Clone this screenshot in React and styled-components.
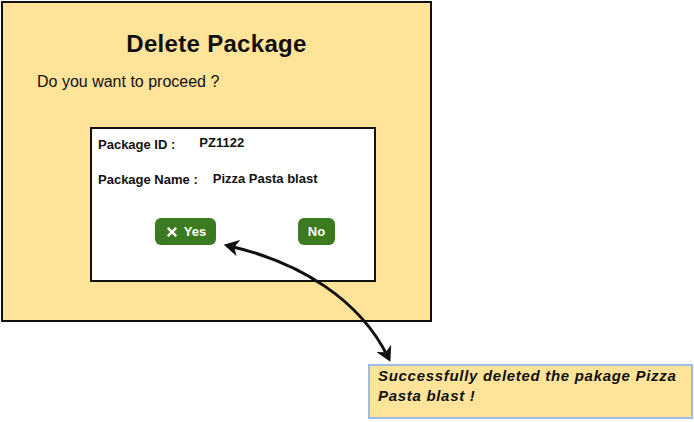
import React from "react";
import styled, { createGlobalStyle } from "styled-components";
import { FaTimes } from "react-icons/fa";

const GlobalStyle = createGlobalStyle`
  body {
    margin: 0;
    background: #ffffff;
    font-family: "Liberation Sans", Arial, sans-serif;
    color: #111;
  }
`;

// Styled components
const Canvas = styled.div`
  position: relative;
  width: 694px;
  height: 422px;
  overflow: hidden;
  padding-top: 1px;
  box-sizing: border-box;
`;

const Panel = styled.section`
  margin-left: 1px;
  width: 431px;
  height: 321px;
  box-sizing: border-box;
  background: #fee399;
  border: 2px solid #111;
  padding: 27px 0 0 34px;
`;

const Title = styled.h1`
  margin: 0 0 14px -34px;
  font-size: 24px;
  line-height: 28px;
  font-weight: 700;
  text-align: center;
  letter-spacing: 0.3px;
`;

const Question = styled.p`
  margin: 0;
  font-size: 16px;
  line-height: 20px;
`;

const Dialog = styled.div`
  margin: 35px 0 0 53px;
  width: 286px;
  height: 155px;
  box-sizing: border-box;
  background: #fff;
  border: 2px solid #111;
  padding: 8px 0 0 6px;
`;

const Row = styled.div`
  display: flex;
  gap: ${(p) => p.$gap}px;
  margin-bottom: 19px;
  font-size: 13px;
  line-height: 16px;
  font-weight: 700;
`;

const Value = styled.span`
  position: relative;
  top: ${(p) => p.$lift || 0}px;
`;

const Actions = styled.div`
  display: flex;
  gap: 82px;
  margin: 30px 0 0 57px;
`;

const Button = styled.button`
  display: flex;
  align-items: center;
  justify-content: center;
  gap: 5px;
  width: ${(p) => p.$width}px;
  height: 27px;
  padding: 0;
  border: none;
  border-radius: 6px;
  background: #3c7a20;
  color: #fff;
  font-family: "Liberation Sans", Arial, sans-serif;
  font-size: 13px;
  font-weight: 700;
`;

const Callout = styled.div`
  margin: 42px 0 0 368px;
  width: 325px;
  height: 55px;
  box-sizing: border-box;
  background: #fee399;
  border: 2px solid #9dbde8;
  padding: 0 0 0 8px;
  font-size: 15px;
  line-height: 20px;
  font-weight: 700;
  font-style: italic;
  letter-spacing: 0.7px;
`;

const Arrow = styled.svg`
  position: absolute;
  left: 0;
  top: 0;
  pointer-events: none;
`;

const App = () => {
  return (
    <Canvas>
      <GlobalStyle />
      <Panel>
        <Title>Delete Package</Title>
        <Question>Do you want to proceed ?</Question>
        <Dialog>
          <Row $gap={24}>
            <span>Package ID :</span>
            <Value $lift={-2}>PZ1122</Value>
          </Row>
          <Row $gap={15}>
            <span>Package Name :</span>
            <Value $lift={-1}>Pizza Pasta blast</Value>
          </Row>
          <Actions>
            <Button $width={61}>
              <FaTimes size={14} />
              Yes
            </Button>
            <Button $width={37}>No</Button>
          </Actions>
        </Dialog>
      </Panel>
      <Callout>Successfully deleted the pakage Pizza Pasta blast !</Callout>
      <Arrow width="694" height="422" viewBox="0 0 694 422">
        <defs>
          <marker id="head" markerWidth="5" markerHeight="5.5" refX="3.2" refY="2.75" orient="auto-start-reverse">
            <path d="M0 0 L5 2.75 L0 5.5 L1.4 2.75 Z" fill="#111" />
          </marker>
        </defs>
        <path
          d="M229 246 C300 262 360 300 388 357"
          fill="none"
          stroke="#111"
          strokeWidth="3"
          strokeLinecap="round"
          markerStart="url(#head)"
          markerEnd="url(#head)"
        />
      </Arrow>
    </Canvas>
  );
};

export default App;
